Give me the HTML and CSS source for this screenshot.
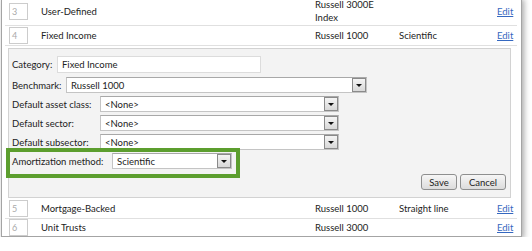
FILE: index.html
```html
<!DOCTYPE html>
<html lang="en">
<head>
  <meta charset="UTF-8" />
  <meta name="viewport" content="width=device-width, initial-scale=1.0"/>
  <title>Categories</title>
  <link rel="stylesheet" href="styles.css">
</head>
<body>
  <div class="frame">
    <div class="list">
      <div class="row first">
        <span class="num">3</span>
        <span>User-Defined</span>
        <span class="bench">Russell 3000E Index</span>
        <span></span>
        <a href="#" class="edit">Edit</a>
      </div>
      <div class="row">
        <span class="num">4</span>
        <span>Fixed Income</span>
        <span class="bench">Russell 1000</span>
        <span>Scientific</span>
        <a href="#" class="edit">Edit</a>
      </div>

      <div class="panel">
        <div class="field field-cat">
          <label class="lbl lbl-cat">Category:</label>
          <input class="text" type="text" value="Fixed Income">
        </div>
        <div class="field">
          <label class="lbl lbl-bench">Benchmark:</label>
          <div class="select select-bench"><span>Russell 1000</span><i class="arrow"></i></div>
        </div>
        <div class="field">
          <label class="lbl lbl-def">Default asset class:</label>
          <div class="select select-def"><span>&lt;None&gt;</span><i class="arrow"></i></div>
        </div>
        <div class="field">
          <label class="lbl lbl-def">Default sector:</label>
          <div class="select select-def"><span>&lt;None&gt;</span><i class="arrow"></i></div>
        </div>
        <div class="field">
          <label class="lbl lbl-def">Default subsector:</label>
          <div class="select select-def"><span>&lt;None&gt;</span><i class="arrow"></i></div>
        </div>
        <div class="field amort">
          <label class="lbl lbl-amort">Amortization method:</label>
          <div class="select select-amort"><span>Scientific</span><i class="arrow"></i></div>
        </div>
        <div class="actions">
          <button class="btn">Save</button>
          <button class="btn">Cancel</button>
        </div>
      </div>

      <div class="row">
        <span class="num">5</span>
        <span>Mortgage-Backed</span>
        <span class="bench">Russell 1000</span>
        <span>Straight line</span>
        <a href="#" class="edit">Edit</a>
      </div>
      <div class="row last">
        <span class="num">6</span>
        <span>Unit Trusts</span>
        <span class="bench">Russell 3000</span>
        <span></span>
        <a href="#" class="edit">Edit</a>
      </div>
    </div>
  </div>
</body>
</html>
```

FILE: styles.css
```css
body {
  margin: 0;
  background: #fff;
  font-family: Lato, "Open Sans", sans-serif;
  font-size: 9.5px;
  color: #222;
  overflow: hidden;
}
.frame {
  width: 519px;
  margin-left: 1px;
  border: 1px solid #a4a4a4;
  border-top: none;
  background: #fff;
  box-shadow: 2px 2px 6px rgba(0, 0, 0, 0.35);
}
.list {
  margin-top: -3px;
}
.row {
  display: grid;
  grid-template-columns: 36px 274px 84px 98px auto;
  align-items: center;
  min-height: 17px;
  padding: 1px 0;
  margin: 0 4px 0 3px;
  border-bottom: 1px solid #e0e0e0;
  line-height: 13px;
}
.row.last {
  border-bottom: none;
  padding: 0;
}
.num {
  width: 15px;
  height: 15px;
  margin-left: 4px;
  padding-left: 2px;
  border: 1px solid #ccc;
  color: #aaa;
  font-size: 9px;
  line-height: 15px;
}
.bench {
  max-width: 70px;
}
.edit {
  color: #3568c0;
  text-decoration: underline;
}
.panel {
  margin: 2px 10px 1px 6px;
  padding: 7px 4px 7px 3px;
  background: #f3f3f3;
  border: 1px solid #d2d2d2;
}
.field {
  display: flex;
  align-items: center;
  height: 16px;
  margin-bottom: 3px;
}
.field-cat {
  height: 17px;
  margin-bottom: 4px;
}
.lbl {
  white-space: nowrap;
}
.lbl-cat { width: 45px; }
.lbl-bench { width: 54px; }
.lbl-def { width: 88px; }
.lbl-amort { width: 100px; }
.text {
  box-sizing: border-box;
  width: 204px;
  height: 17px;
  padding: 0 4px;
  border: 1px solid #dcdcdc;
  background: #fff;
  font: inherit;
  color: #222;
}
.select {
  box-sizing: border-box;
  display: flex;
  align-items: center;
  justify-content: space-between;
  height: 16px;
  padding-left: 4px;
  border: 1px solid #c4c4c4;
  border-top-color: #a8a8a8;
  background: #fff;
}
.select-bench { width: 301px; }
.select-def { width: 239px; }
.select-amort { width: 120px; }
.arrow {
  position: relative;
  box-sizing: border-box;
  width: 14px;
  height: 14px;
  border: 1px solid #8a8a8a;
  background: linear-gradient(#f4f4f4, #d8d8d8);
}
.arrow::after {
  content: "";
  position: absolute;
  left: 3px;
  top: 5px;
  border-left: 3px solid transparent;
  border-right: 3px solid transparent;
  border-top: 3px solid #111;
}
.amort {
  position: relative;
  width: max-content;
  margin-bottom: 5px;
}
.amort::after {
  content: "";
  position: absolute;
  left: -6px;
  right: -8px;
  top: -5px;
  bottom: -9px;
  border: 4px solid #5c9e2e;
}
.actions {
  display: flex;
  justify-content: flex-end;
  gap: 3px;
}
.btn {
  height: 16px;
  padding: 0;
  border: 1px solid #8e8f8f;
  border-radius: 3px;
  background: linear-gradient(#f6f6f6, #dcdcdc);
  font: inherit;
  color: #222;
  cursor: pointer;
}
.btn:first-child { width: 36px; }
.btn:last-child { width: 46px; }
```
